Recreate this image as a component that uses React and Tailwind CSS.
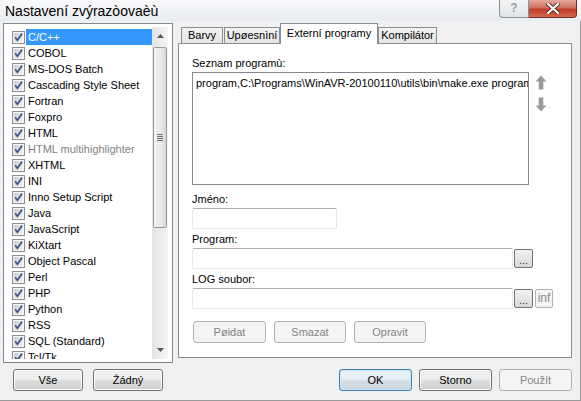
import { useState } from 'react'

const languages = [
  { name: 'C/C++' },
  { name: 'COBOL' },
  { name: 'MS-DOS Batch' },
  { name: 'Cascading Style Sheet' },
  { name: 'Fortran' },
  { name: 'Foxpro' },
  { name: 'HTML' },
  { name: 'HTML multihighlighter', dim: true },
  { name: 'XHTML' },
  { name: 'INI' },
  { name: 'Inno Setup Script' },
  { name: 'Java' },
  { name: 'JavaScript' },
  { name: 'KiXtart' },
  { name: 'Object Pascal' },
  { name: 'Perl' },
  { name: 'PHP' },
  { name: 'Python' },
  { name: 'RSS' },
  { name: 'SQL (Standard)' },
  { name: 'Tcl/Tk' },
]

const tabs = [
  { label: 'Barvy', w: 'w-[42px] ml-[3px]' },
  { label: 'Upøesnìní', w: 'w-[56px] ml-[1px]' },
  { label: 'Externí programy', w: 'w-[98px]' },
  { label: 'Kompilátor', w: 'w-[59px]' },
]

const btn =
  'h-[22px] rounded-[3px] border border-[#707070] bg-[linear-gradient(to_bottom,#f2f2f2_0%,#ebebeb_50%,#dddddd_51%,#cfcfcf_100%)] shadow-[inset_0_0_0_1px_#fcfcfc] text-black'
const btnDisabled =
  'h-[22px] rounded-[3px] border border-[#adb2b5] bg-[#f4f4f4] text-[#838383]'
const input =
  'h-[21px] rounded-[2px] border border-[#e3e9ef] border-t-[#abadb3] bg-white'

function Check() {
  return (
    <svg width="13" height="13" viewBox="0 0 13 13" className="shrink-0">
      <defs>
        <linearGradient id="cbg" x1="0" y1="0" x2="1" y2="1">
          <stop offset="0" stopColor="#c9ccd2" />
          <stop offset="1" stopColor="#f7f7f7" />
        </linearGradient>
      </defs>
      <rect x="0.5" y="0.5" width="12" height="12" fill="#f4f4f4" stroke="#8e8f8f" />
      <rect x="2" y="2" width="9" height="9" fill="url(#cbg)" />
      <path d="M3.2 6.3 L5.4 9.2 L10 2.8" fill="none" stroke="#3f5487" strokeWidth="1.9" />
    </svg>
  )
}

function Arrow({ down }) {
  return (
    <svg width="12" height="15" viewBox="0 0 12 15" className={down ? 'rotate-180' : ''}>
      <path d="M6 0.5 L11.5 6.5 L8.3 6.5 L8.3 14.5 L3.7 14.5 L3.7 6.5 L0.5 6.5 Z" fill="#9a9a9a" />
    </svg>
  )
}

function Scrollbar() {
  return (
    <div className="flex w-[16px] flex-col bg-[linear-gradient(to_right,#e3e3e3,#f4f4f4)]">
      <div className="flex h-[18px] items-center justify-center">
        <svg width="7" height="4" viewBox="0 0 7 4">
          <path d="M0 4 L3.5 0 L7 4 Z" fill="#555" />
        </svg>
      </div>
      <div className="mx-[1px] mt-[2px] flex h-[181px] items-center justify-center rounded-[2px] border border-[#9b9b9b] bg-[linear-gradient(to_right,#f3f3f3,#e8e8e8_60%,#d6d6d6)]">
        <div className="flex flex-col gap-[1px]">
          <div className="h-[1px] w-[6px] bg-[#6f6f6f]" />
          <div className="h-[1px] w-[6px] bg-[#6f6f6f]" />
          <div className="h-[1px] w-[6px] bg-[#6f6f6f]" />
          <div className="h-[1px] w-[6px] bg-[#6f6f6f]" />
        </div>
      </div>
      <div className="flex-1" />
      <div className="flex h-[18px] items-center justify-center">
        <svg width="7" height="4" viewBox="0 0 7 4">
          <path d="M0 0 L3.5 4 L7 0 Z" fill="#555" />
        </svg>
      </div>
    </div>
  )
}

export default function App() {
  const [active] = useState(2)

  return (
    <div
      className="flex h-[401px] w-[581px] flex-col overflow-hidden bg-[#f0f0f0] text-[11px] leading-[13px] text-black"
      style={{ fontFamily: '"Liberation Sans", Arial, sans-serif' }}
    >
      {/* title bar */}
      <div className="flex h-[21px] shrink-0 items-start justify-between bg-[linear-gradient(to_bottom,#f8f9fb,#e9ecef)]">
        <div className="pl-[5px] pt-[3px] text-[14px] leading-[17px] text-black">Nastavení zvýrazòovaèù</div>
        <div className="mr-[4px] flex">
          <div className="flex h-[18px] w-[30px] items-center justify-center rounded-bl-[4px] border border-t-0 border-[#8c8f94] bg-[linear-gradient(to_bottom,#f4f5f6,#dfe2e6)] text-[12px] font-bold text-[#9aa0a8]">
            ?
          </div>
          <div className="flex h-[18px] w-[48px] items-center justify-center rounded-br-[4px] border border-l-0 border-t-0 border-[#6d2c25] bg-[linear-gradient(to_bottom,#e6a89d,#d2705f_45%,#c23a27_55%,#d66a4f)]">
            <svg width="14" height="11" viewBox="0 0 14 11">
              <path d="M2 1 L12 10 M12 1 L2 10" stroke="#5a2a24" strokeWidth="4" strokeLinecap="square" />
              <path d="M2 1 L12 10 M12 1 L2 10" stroke="#fff" strokeWidth="2.2" strokeLinecap="square" />
            </svg>
          </div>
        </div>
      </div>

      {/* body */}
      <div className="flex flex-1 border-b border-r border-[#9a9a9a] pb-[7px] pl-[3px] pt-[2px] pr-[6px]">
        {/* left column */}
        <div className="flex w-[170px] flex-col">
          <div className="flex h-[340px] border border-[#828790] bg-white pb-[3px] pl-[8px] pr-[4px] pt-[3px]">
            <div className="flex flex-1 flex-col overflow-hidden pt-[2px]">
              {languages.map((l, i) => (
                <div key={l.name} className="flex h-[16px] shrink-0 items-center">
                  <Check />
                  <div
                    className={
                      'ml-[1px] flex h-[16px] flex-1 items-center pl-[2px] whitespace-nowrap ' +
                      (i === 0 ? 'bg-[#3399ff] text-white' : l.dim ? 'text-[#7f7f7f]' : 'text-black')
                    }
                  >
                    {l.name}
                  </div>
                </div>
              ))}
            </div>
            <Scrollbar />
          </div>
          <div className="mt-[6px] flex gap-[10px] pl-[10px]">
            <button className={btn + ' w-[70px]'}>Vše</button>
            <button className={btn + ' w-[70px]'}>Žádný</button>
          </div>
        </div>

        {/* right column */}
        <div className="ml-[5px] flex w-[394px] flex-col">
          <div className="flex h-[20px] items-end">
            {tabs.map((t, i) =>
              i === active ? (
                <div
                  key={t.label}
                  className={
                    'relative z-10 -mb-[1px] flex h-[21px] items-start justify-center border border-b-0 border-[#898c95] bg-white pt-[3px] ' +
                    t.w
                  }
                >
                  {t.label}
                </div>
              ) : (
                <div
                  key={t.label}
                  className={
                    'flex h-[16px] items-center justify-center border border-b-0 border-[#898c95] bg-[linear-gradient(to_bottom,#f3f3f3,#e4e4e4)] ' +
                    t.w
                  }
                >
                  {t.label}
                </div>
              )
            )}
          </div>
          <div className="flex h-[315px] flex-col border border-[#898c95] bg-white pl-[13px] pt-[13px]">
            <div>Seznam programù:</div>
            <div className="mt-[2px] flex">
              <div className="h-[113px] w-[337px] overflow-hidden border border-[#828790] px-[3px] pt-[4px] whitespace-nowrap">
                program,C:\Programs\WinAVR-20100110\utils\bin\make.exe program
              </div>
              <div className="ml-[6px] flex flex-col gap-[7px] pt-[3px]">
                <Arrow />
                <Arrow down />
              </div>
            </div>

            <div className="mt-[8px]">Jméno:</div>
            <div className={input + ' mt-[2px] w-[145px]'} />

            <div className="mt-[4px]">Program:</div>
            <div className="mt-[2px] flex items-center">
              <div className={input + ' w-[321px]'} />
              <button className="ml-[1px] flex h-[19px] w-[19px] items-end justify-center rounded-[2px] border border-[#707070] bg-[linear-gradient(to_bottom,#f2f2f2,#d8d8d8)] pb-[3px] text-[11px] leading-[8px] text-[#3a2a6a]">
                ...
              </button>
            </div>

            <div className="mt-[4px]">LOG soubor:</div>
            <div className="mt-[2px] flex items-center">
              <div className={input + ' w-[321px]'} />
              <button className="ml-[1px] flex h-[19px] w-[19px] items-end justify-center rounded-[2px] border border-[#707070] bg-[linear-gradient(to_bottom,#f2f2f2,#d8d8d8)] pb-[3px] text-[11px] leading-[8px] text-[#3a2a6a]">
                ...
              </button>
              <button className="ml-[2px] flex h-[19px] w-[18px] items-center justify-center rounded-[2px] border border-[#adb2b5] bg-[#f4f4f4] text-[12px] text-[#8a8a8a]">
                inf
              </button>
            </div>

            <div className="mt-[12px] flex gap-[8px] pl-[1px]">
              <button className={btnDisabled + ' w-[73px]'}>Pøidat</button>
              <button className={btnDisabled + ' w-[72px]'}>Smazat</button>
              <button className={btnDisabled + ' w-[72px]'}>Opravit</button>
            </div>
          </div>
          <div className="mt-[11px] flex justify-end gap-[7px]">
            <button className="h-[22px] w-[73px] rounded-[3px] border border-[#3c7fb1] bg-[linear-gradient(to_bottom,#eef3f7_0%,#e6ecf1_50%,#d6dee6_51%,#cbd4dc_100%)] shadow-[inset_0_0_0_1px_#c8e6f8] text-black">
              OK
            </button>
            <button className={btn + ' w-[73px]'}>Storno</button>
            <button className={btnDisabled + ' w-[73px]'}>Použít</button>
          </div>
        </div>
      </div>
    </div>
  )
}
